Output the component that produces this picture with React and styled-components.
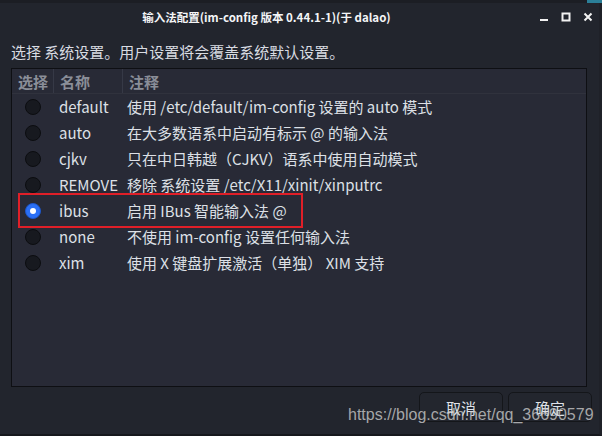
import React from 'react';
import styled, { createGlobalStyle } from 'styled-components';

const GlobalStyle = createGlobalStyle`
  html, body {
    margin: 0;
    padding: 0;
    background: #22252d;
  }
  body {
    font-family: 'Noto Sans CJK SC', 'Noto Sans', sans-serif;
    color: #dcdfe5;
  }
`;

const rows = [
  { name: 'default', note: '使用 /etc/default/im-config 设置的 auto 模式' },
  { name: 'auto', note: '在大多数语系中启动有标示 @ 的输入法' },
  { name: 'cjkv', note: '只在中日韩越（CJKV）语系中使用自动模式' },
  { name: 'REMOVE', note: '移除 系统设置 /etc/X11/xinit/xinputrc' },
  { name: 'ibus', note: '启用 IBus 智能输入法 @', checked: true },
  { name: 'none', note: '不使用 im-config 设置任何输入法' },
  { name: 'xim', note: '使用 X 键盘扩展激活（单独） XIM 支持' },
];

const App = () => {
  return (
    <Screen>
      <GlobalStyle />
      <BehindStrip>
        <span />
        <TealCorner />
      </BehindStrip>
      <Window>
        <TitleBar>
          <Title>输入法配置(im-config 版本 0.44.1-1)(于 dalao)</Title>
          <Controls>
            <CtrlButton aria-label='minimize'>
              <svg width='10' height='10' viewBox='0 0 10 10'>
                <rect x='1' y='7' width='8' height='2' fill='#f2f2f2' />
              </svg>
            </CtrlButton>
            <CtrlButton aria-label='maximize'>
              <svg width='10' height='10' viewBox='0 0 10 10'>
                <rect x='1.5' y='1.5' width='7' height='7' fill='none' stroke='#f2f2f2' strokeWidth='2' />
              </svg>
            </CtrlButton>
            <CtrlButton aria-label='close'>
              <svg width='10' height='10' viewBox='0 0 10 10'>
                <path d='M1.5 1.5 L8.5 8.5 M8.5 1.5 L1.5 8.5' stroke='#f2f2f2' strokeWidth='2' />
              </svg>
            </CtrlButton>
          </Controls>
        </TitleBar>

        <Body>
          <Prompt>选择 系统设置。用户设置将会覆盖系统默认设置。</Prompt>
          <Table>
            <HeaderRow>
              <HeaderCell>选择</HeaderCell>
              <HeaderCell>名称</HeaderCell>
              <HeaderCell $last>注释</HeaderCell>
            </HeaderRow>
            {rows.map((row) => (
              <Row key={row.name}>
                <RadioCell>
                  <Radio $checked={row.checked} />
                </RadioCell>
                <NameCell>{row.name}</NameCell>
                <NoteCell>{row.note}</NoteCell>
              </Row>
            ))}
            <Highlight />
          </Table>
        </Body>

        <Footer>
          <DialogButton>取消</DialogButton>
          <DialogButton>确定</DialogButton>
        </Footer>
        <Watermark>https://blog.csdn.net/qq_36690579</Watermark>
      </Window>
    </Screen>
  );
};

const Screen = styled.div`
  width: 602px;
  height: 436px;
  overflow: hidden;
  display: flex;
  flex-direction: column;
  background: #22252d;
`;

const BehindStrip = styled.div`
  height: 3px;
  flex: none;
  display: flex;
  justify-content: space-between;
  background: #1c1e24;
  span {
    display: block;
  }
`;

const TealCorner = styled.div`
  width: 15px;
  background: #2b7f98;
`;

const Window = styled.div`
  position: relative;
  flex: 1;
  display: flex;
  flex-direction: column;
  background: #22252d;
  border-right: 3px solid #1f2128;
  border-bottom: 2px solid #16181d;
`;

const TitleBar = styled.div`
  height: 27px;
  display: flex;
  align-items: center;
`;

const Title = styled.div`
  flex: 1;
  text-align: center;
  font-size: 11.5px;
  font-weight: 700;
  color: #f4f5f7;
  white-space: nowrap;
`;

const Controls = styled.div`
  display: flex;
  gap: 8px;
  padding-right: 4px;
  margin-left: 4px;
`;

const CtrlButton = styled.div`
  width: 14px;
  height: 14px;
  display: flex;
  align-items: center;
  justify-content: center;
`;

const Body = styled.div`
  padding: 0 12px 0 11px;
`;

const Prompt = styled.div`
  height: 38px;
  line-height: 44px;
  font-size: 15px;
  color: #d9dce2;
  white-space: nowrap;
`;

const Table = styled.div`
  position: relative;
  height: 317px;
  background: #282a36;
  border: 1px solid #0e0f13;
`;

const HeaderRow = styled.div`
  display: grid;
  grid-template-columns: 42px 69px 1fr;
  height: 24px;
  border-bottom: 1px solid #30323d;
`;

const HeaderCell = styled.div`
  display: flex;
  align-items: center;
  padding-left: 6px;
  font-size: 15px;
  font-weight: 700;
  color: #8a8e98;
  border-right: ${(p) => (p.$last ? 'none' : '1px solid #363946')};
`;

const Row = styled.div`
  display: grid;
  grid-template-columns: 42px 69px 1fr;
  height: 26px;
  align-items: center;
  font-size: 15px;
  color: #dde0e6;
  white-space: nowrap;
  line-height: 24px;
`;

const RadioCell = styled.div`
  display: flex;
  justify-content: center;
`;

const Radio = styled.div`
  width: 16px;
  height: 16px;
  box-sizing: border-box;
  border-radius: 50%;
  display: flex;
  align-items: center;
  justify-content: center;
  background: ${(p) => (p.$checked ? '#2a6ff5' : '#17191f')};
  border: 1px solid ${(p) => (p.$checked ? '#1d56c9' : '#0c0d10')};
  &::after {
    content: '';
    display: ${(p) => (p.$checked ? 'block' : 'none')};
    width: 6px;
    height: 6px;
    border-radius: 50%;
    background: #ffffff;
  }
`;

const NameCell = styled.div`
  padding-left: 5px;
`;

const NoteCell = styled.div`
  padding-left: 4px;
`;

const Highlight = styled.div`
  position: absolute;
  left: 6px;
  top: 124px;
  width: 281px;
  height: 31px;
  border: 2px solid #e01f28;
  pointer-events: none;
`;

const Footer = styled.div`
  display: flex;
  justify-content: flex-end;
  gap: 5px;
  padding: 5px 7px 0 0;
`;

const DialogButton = styled.div`
  width: 84px;
  height: 30px;
  box-sizing: border-box;
  display: flex;
  align-items: center;
  justify-content: center;
  border: 1px solid #14161a;
  border-radius: 5px;
  background: #23262e;
  font-size: 15px;
  color: #dfe2e8;
`;

const Watermark = styled.div`
  position: absolute;
  left: 348px;
  top: 403px;
  font-family: 'Liberation Sans', Arial, sans-serif;
  font-size: 16px;
  color: rgba(205, 205, 205, 0.78);
  white-space: nowrap;
  pointer-events: none;
`;

export default App;
